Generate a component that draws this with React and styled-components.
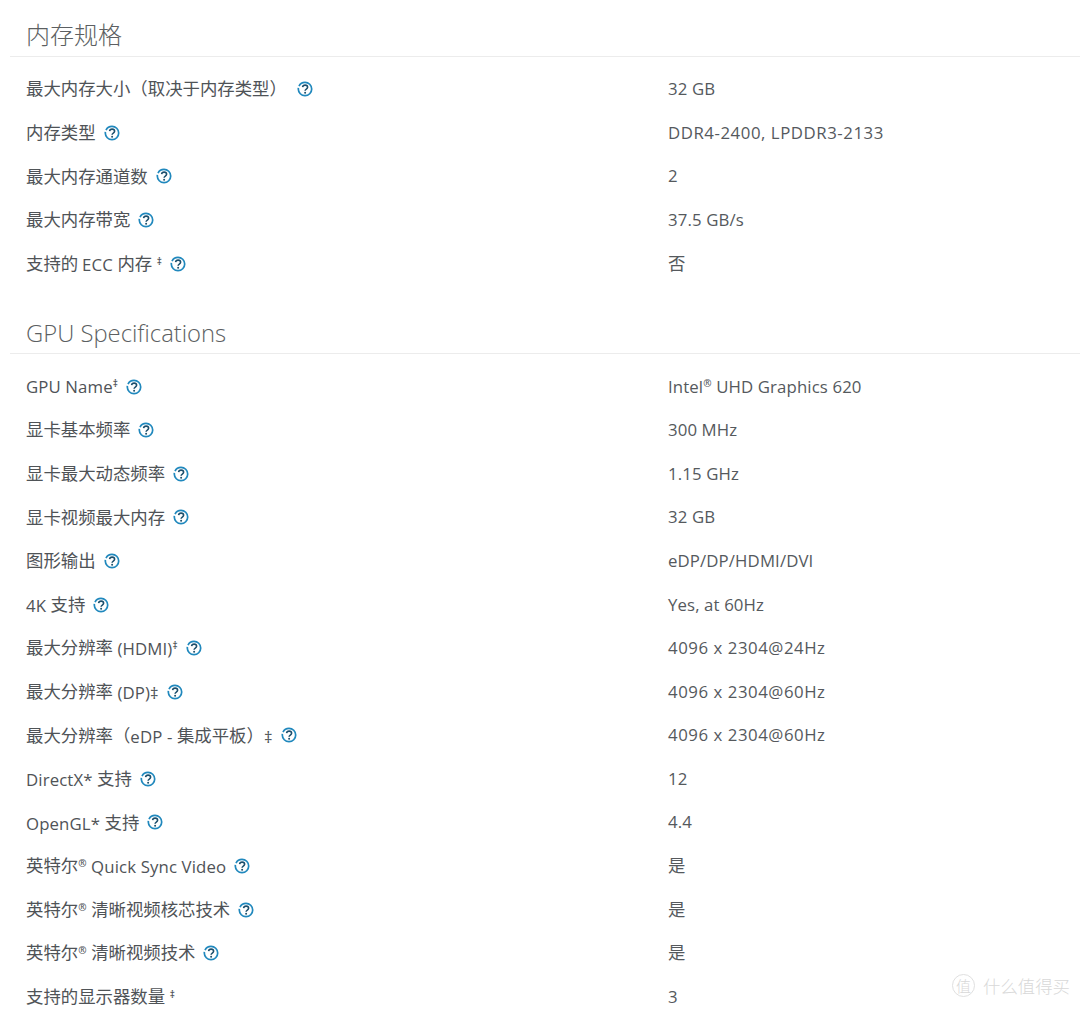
import React from "react";
import styled, { createGlobalStyle } from "styled-components";

const Global = createGlobalStyle`
  html, body { margin: 0; padding: 0; background: #fff; height: 1009px; overflow: hidden; }
`;

const Page = styled.main`
  position: relative;
  width: 1080px;
  height: 1009px;
  overflow: hidden;
  padding-left: 10px;
  box-sizing: border-box;
  font-family: "Open Sans", "Noto Sans CJK SC", sans-serif;
  color: #555a5e;
`;

const Section = styled.section`
  & + & { margin-top: 12px; }
`;

const Heading = styled.h2`
  margin: 0;
  height: ${(p) => (p.$cjk ? 49 : 51)}px;
  padding: 0 0 ${(p) => (p.$cjk ? 7 : 5)}px 16px;
  border-bottom: 1px solid #ececec;
  font-size: ${(p) => (p.$cjk ? 24 : 23.8)}px;
  font-weight: 300;
  line-height: 30px;
  color: #5c5f62;
  display: flex;
  align-items: flex-end;
  font-family: ${(p) => (p.$cjk ? '"Noto Sans CJK SC"' : '"Open Sans"')}, sans-serif;
`;

const Rows = styled.div`
  padding-top: 10.4px;
`;

const Row = styled.div`
  display: grid;
  grid-template-columns: 642px 1fr;
  height: 43.6px;
  align-items: center;
  padding-left: 16px;
  font-size: 16.8px;
  letter-spacing: 0.12px;
`;

const Label = styled.div`
  display: flex;
  align-items: center;
  gap: ${(p) => p.$gap ?? 8}px;
  color: #4f5357;
  white-space: pre;
  line-height: 22px;
`;

const Cjk = styled.span`
  font-size: 17.4px;
  letter-spacing: 0;
  font-family: "Noto Sans CJK SC", sans-serif;
  vertical-align: 0.6px;
`;

const Value = styled.div`
  color: #55595d;
  white-space: pre;
  line-height: 22px;
  letter-spacing: ${(p) => (p.$wide ? "0.55px" : "0.12px")};
`;

const Mark = styled.sup`
  font-size: 10px;
  line-height: 0;
  vertical-align: 6px;
  font-weight: 600;
`;

const Watermark = styled.div`
  position: absolute;
  right: 10px;
  bottom: 11px;
  display: flex;
  align-items: center;
  gap: 8px;
  color: #d8d8d8;
  font-family: "Noto Sans CJK SC", sans-serif;
  font-size: 17.4px;
  font-weight: 300;
`;

const Badge = styled.span`
  width: 21px;
  height: 21px;
  border: 1px solid #e0e0e0;
  border-radius: 50%;
  display: flex;
  align-items: center;
  justify-content: center;
  font-size: 15px;
`;

const HelpIcon = () => (
  <svg width="16" height="16" viewBox="0 0 16 16" fill="none" aria-hidden="true">
    <circle cx="8" cy="8" r="6.7" stroke="#2088bd" strokeWidth="1.7" strokeDasharray="36 2" strokeDashoffset="14" />
    <path d="M5.6 6.2c.2-1.4 1.1-2.1 2.5-2.1 1.5 0 2.5.8 2.5 2.1 0 2-2.5 1.7-2.5 3.6" stroke="#1d4f6c" strokeWidth="1.6" />
    <circle cx="8.1" cy="11.8" r="1" fill="#1d4f6c" />
  </svg>
);

const mem = [
  { l: <Cjk>最大内存大小（取决于内存类型）</Cjk>, v: "32 GB", gap: 10 },
  { l: <Cjk>内存类型</Cjk>, v: "DDR4-2400, LPDDR3-2133", wide: true },
  { l: <Cjk>最大内存通道数</Cjk>, v: "2" },
  { l: <Cjk>最大内存带宽</Cjk>, v: "37.5 GB/s" },
  { l: <><Cjk>支持的 </Cjk>ECC <Cjk>内存</Cjk> <Mark>‡</Mark></>, v: <Cjk>否</Cjk> },
];

const gpu = [
  { l: <>GPU Name<Mark>‡</Mark></>, v: <>Intel<Mark>®</Mark> UHD Graphics 620</> },
  { l: <Cjk>显卡基本频率</Cjk>, v: "300 MHz" },
  { l: <Cjk>显卡最大动态频率</Cjk>, v: "1.15 GHz" },
  { l: <Cjk>显卡视频最大内存</Cjk>, v: "32 GB" },
  { l: <Cjk>图形输出</Cjk>, v: "eDP/DP/HDMI/DVI" },
  { l: <>4K <Cjk>支持</Cjk></>, v: "Yes, at 60Hz" },
  { l: <><Cjk>最大分辨率</Cjk> (HDMI)<Mark>‡</Mark></>, v: "4096 x 2304@24Hz", wide: true },
  { l: <><Cjk>最大分辨率</Cjk> (DP)‡</>, v: "4096 x 2304@60Hz", wide: true },
  { l: <><Cjk>最大分辨率（</Cjk>eDP - <Cjk>集成平板）</Cjk>‡</>, v: "4096 x 2304@60Hz", wide: true },
  { l: <>DirectX* <Cjk>支持</Cjk></>, v: "12" },
  { l: <>OpenGL* <Cjk>支持</Cjk></>, v: "4.4" },
  { l: <><Cjk>英特尔</Cjk><Mark>®</Mark> Quick Sync Video</>, v: <Cjk>是</Cjk> },
  { l: <><Cjk>英特尔</Cjk><Mark>®</Mark> <Cjk>清晰视频核芯技术</Cjk></>, v: <Cjk>是</Cjk> },
  { l: <><Cjk>英特尔</Cjk><Mark>®</Mark> <Cjk>清晰视频技术</Cjk></>, v: <Cjk>是</Cjk> },
  { l: <><Cjk>支持的显示器数量</Cjk> <Mark>‡</Mark></>, v: "3", noIcon: true },
];

const SpecRow = ({ l, v, gap, noIcon, wide }) => (
  <Row>
    <Label $gap={gap}>
      <span>{l}</span>
      {!noIcon && <HelpIcon />}
    </Label>
    <Value $wide={wide}>{v}</Value>
  </Row>
);

export default function App() {
  return (
    <Page>
      <Global />
      <Section>
        <Heading $cjk>内存规格</Heading>
        <Rows>{mem.map((r, i) => <SpecRow key={i} {...r} />)}</Rows>
      </Section>
      <Section>
        <Heading>GPU Specifications</Heading>
        <Rows>{gpu.map((r, i) => <SpecRow key={i} {...r} />)}</Rows>
      </Section>
      <Watermark>
        <Badge>值</Badge>
        <span>什么值得买</span>
      </Watermark>
    </Page>
  );
}
